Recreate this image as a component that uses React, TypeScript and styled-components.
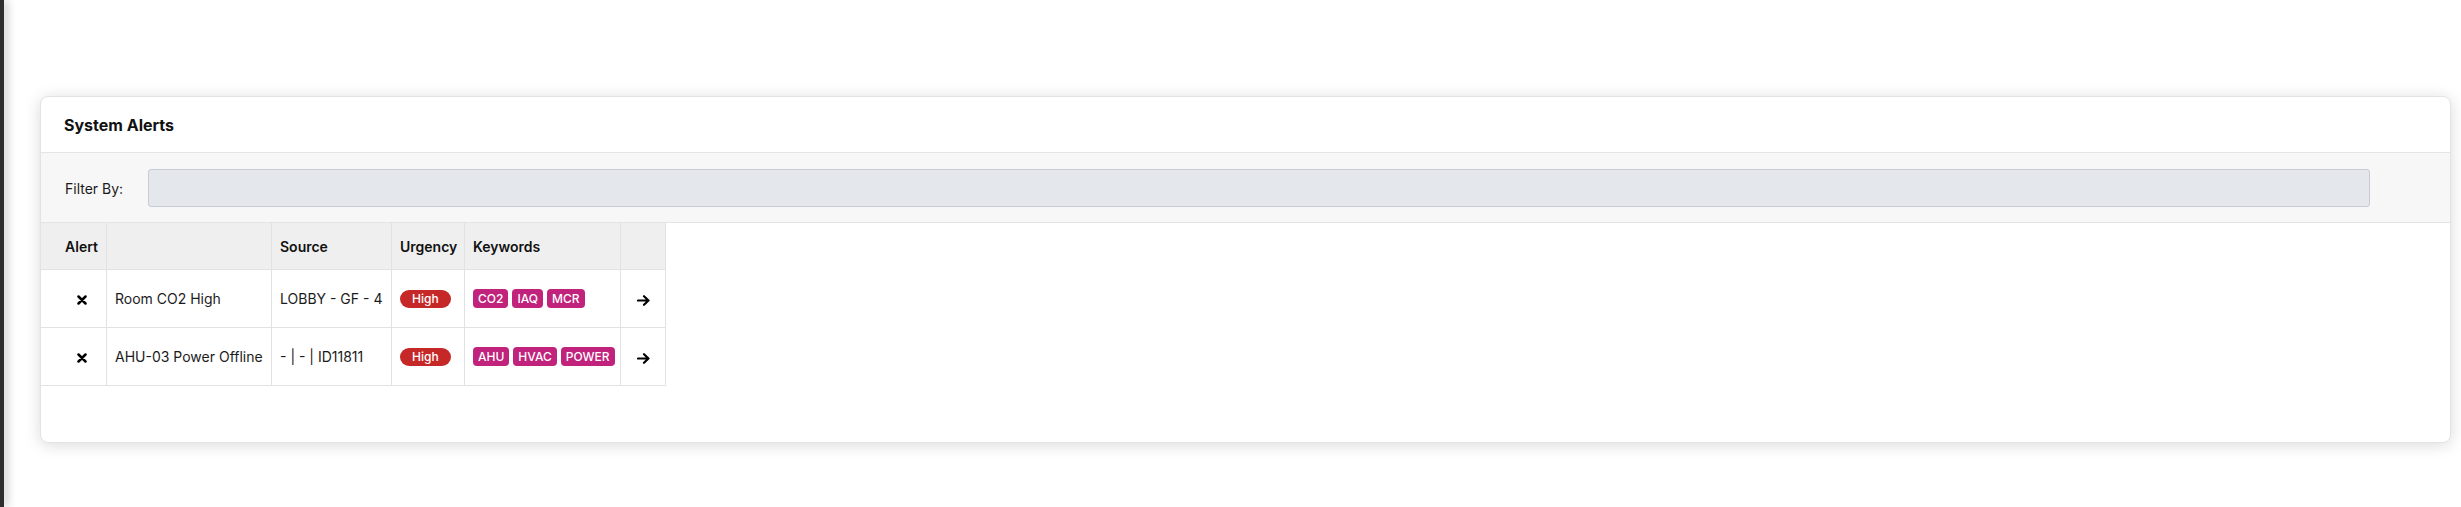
import React from "react";
import styled, { createGlobalStyle } from "styled-components";

const GlobalStyle = createGlobalStyle`
  html, body {
    margin: 0;
    padding: 0;
    background: #ffffff;
  }
  body {
    font-family: Inter, "Noto Sans", "Liberation Sans", sans-serif;
    color: #1b1b1b;
  }
`;

const Page = styled.div`
  display: flex;
  min-height: 507px;
`;

const SideEdge = styled.div`
  width: 4px;
  flex-shrink: 0;
  background: #2e2e2e;
  box-shadow: 3px 0 9px rgba(0, 0, 0, 0.3);
`;

const Main = styled.main`
  flex: 1;
  padding: 96px 10px 0 36px;
`;

const Card = styled.section`
  background: #fff;
  border: 1px solid #e3e3e3;
  border-radius: 8px;
  box-shadow: 0 2px 16px rgba(0, 0, 0, 0.15);
  overflow: hidden;
  padding-bottom: 56px;
`;

const CardHeader = styled.header`
  box-sizing: border-box;
  height: 56px;
  display: flex;
  align-items: center;
  padding: 0 23px;
  border-bottom: 1px solid #e4e4e4;
`;

const Title = styled.h2`
  margin: 0;
  font-size: 16px;
  font-weight: 700;
  color: #111;
`;

const FilterBar = styled.div`
  display: flex;
  align-items: center;
  gap: 25px;
  padding: 16px 80px 15px 24px;
  background: #f7f7f7;
  border-bottom: 1px solid #e4e4e4;
`;

const FilterLabel = styled.label`
  font-size: 14px;
  color: #1b1b1b;
`;

const FilterInput = styled.input`
  flex: 1;
  box-sizing: border-box;
  height: 38px;
  background: #e4e7eb;
  border: 1px solid #c8cbd3;
  border-radius: 3px;
  outline: none;
`;

const Table = styled.table`
  table-layout: fixed;
  width: 625px;
  border-collapse: separate;
  border-spacing: 0;
  font-size: 14px;
`;

const Th = styled.th<{ $w: number; $first?: boolean }>`
  box-sizing: border-box;
  width: ${(p) => p.$w}px;
  height: 47px;
  padding: ${(p) => (p.$first ? "0 8px 0 24px" : "0 8px")};
  text-align: ${(p) => (p.$first ? "center" : "left")};
  font-weight: 600;
  color: #111;
  background: #efefef;
  border-right: 1px solid #e2e2e2;
  border-bottom: 1px solid #e2e2e2;
  white-space: nowrap;
`;

const Td = styled.td<{ $first?: boolean; $center?: boolean }>`
  box-sizing: border-box;
  height: 58px;
  padding: ${(p) => (p.$first ? "0 8px 0 24px" : "0 8px")};
  text-align: ${(p) => (p.$first || p.$center ? "center" : "left")};
  vertical-align: middle;
  border-right: 1px solid #e2e2e2;
  border-bottom: 1px solid #e2e2e2;
  white-space: nowrap;
  color: #1b1b1b;
`;

const UrgencyBadge = styled.span`
  display: inline-block;
  height: 18px;
  line-height: 18px;
  padding: 0 12px;
  border-radius: 9px;
  background: #c62828;
  color: #fff;
  font-size: 12px;
  font-weight: 500;
`;

const KeywordList = styled.div`
  display: flex;
  gap: 4px;
`;

const KeywordBadge = styled.span`
  display: inline-block;
  height: 19px;
  line-height: 19px;
  padding: 0 5px;
  border-radius: 4px;
  background: #c0227c;
  color: #fff;
  font-size: 12px;
  font-weight: 500;
`;

const IconButton = styled.span`
  display: inline-flex;
  align-items: center;
  justify-content: center;
  vertical-align: middle;
  color: #000;
  cursor: pointer;
`;

const CloseIcon = () => (
  <svg width="10" height="10" viewBox="0 0 10 10">
    <path d="M1.5 1.5 L8.5 8.5 M8.5 1.5 L1.5 8.5" stroke="currentColor" strokeWidth="2.5" strokeLinecap="round" />
  </svg>
);

const ArrowIcon = () => (
  <svg width="13" height="11" viewBox="0 0 13 11">
    <path d="M1 5.5 H11.5 M7 1.2 L11.5 5.5 L7 9.8" stroke="currentColor" strokeWidth="2.2" fill="none" strokeLinecap="round" strokeLinejoin="round" />
  </svg>
);

type Alert = {
  id: string;
  name: string;
  source: string;
  urgency: string;
  keywords: string[];
};

const alerts: Alert[] = [
  { id: "a1", name: "Room CO2 High", source: "LOBBY - GF - 4", urgency: "High", keywords: ["CO2", "IAQ", "MCR"] },
  { id: "a2", name: "AHU-03 Power Offline", source: "- | - | ID11811", urgency: "High", keywords: ["AHU", "HVAC", "POWER"] },
];

function App() {
  return (
    <>
      <GlobalStyle />
      <Page>
        <SideEdge />
        <Main>
          <Card>
            <CardHeader>
              <Title>System Alerts</Title>
            </CardHeader>
            <FilterBar>
              <FilterLabel>Filter By:</FilterLabel>
              <FilterInput />
            </FilterBar>
            <Table>
              <thead>
                <tr>
                  <Th $w={66} $first>Alert</Th>
                  <Th $w={165}></Th>
                  <Th $w={120}>Source</Th>
                  <Th $w={73}>Urgency</Th>
                  <Th $w={156}>Keywords</Th>
                  <Th $w={45}></Th>
                </tr>
              </thead>
              <tbody>
                {alerts.map((a) => (
                  <tr key={a.id}>
                    <Td $first>
                      <IconButton><CloseIcon /></IconButton>
                    </Td>
                    <Td>{a.name}</Td>
                    <Td>{a.source}</Td>
                    <Td>
                      <UrgencyBadge>{a.urgency}</UrgencyBadge>
                    </Td>
                    <Td>
                      <KeywordList>
                        {a.keywords.map((k) => (
                          <KeywordBadge key={k}>{k}</KeywordBadge>
                        ))}
                      </KeywordList>
                    </Td>
                    <Td $center>
                      <IconButton><ArrowIcon /></IconButton>
                    </Td>
                  </tr>
                ))}
              </tbody>
            </Table>
          </Card>
        </Main>
      </Page>
    </>
  );
}

export default App;
